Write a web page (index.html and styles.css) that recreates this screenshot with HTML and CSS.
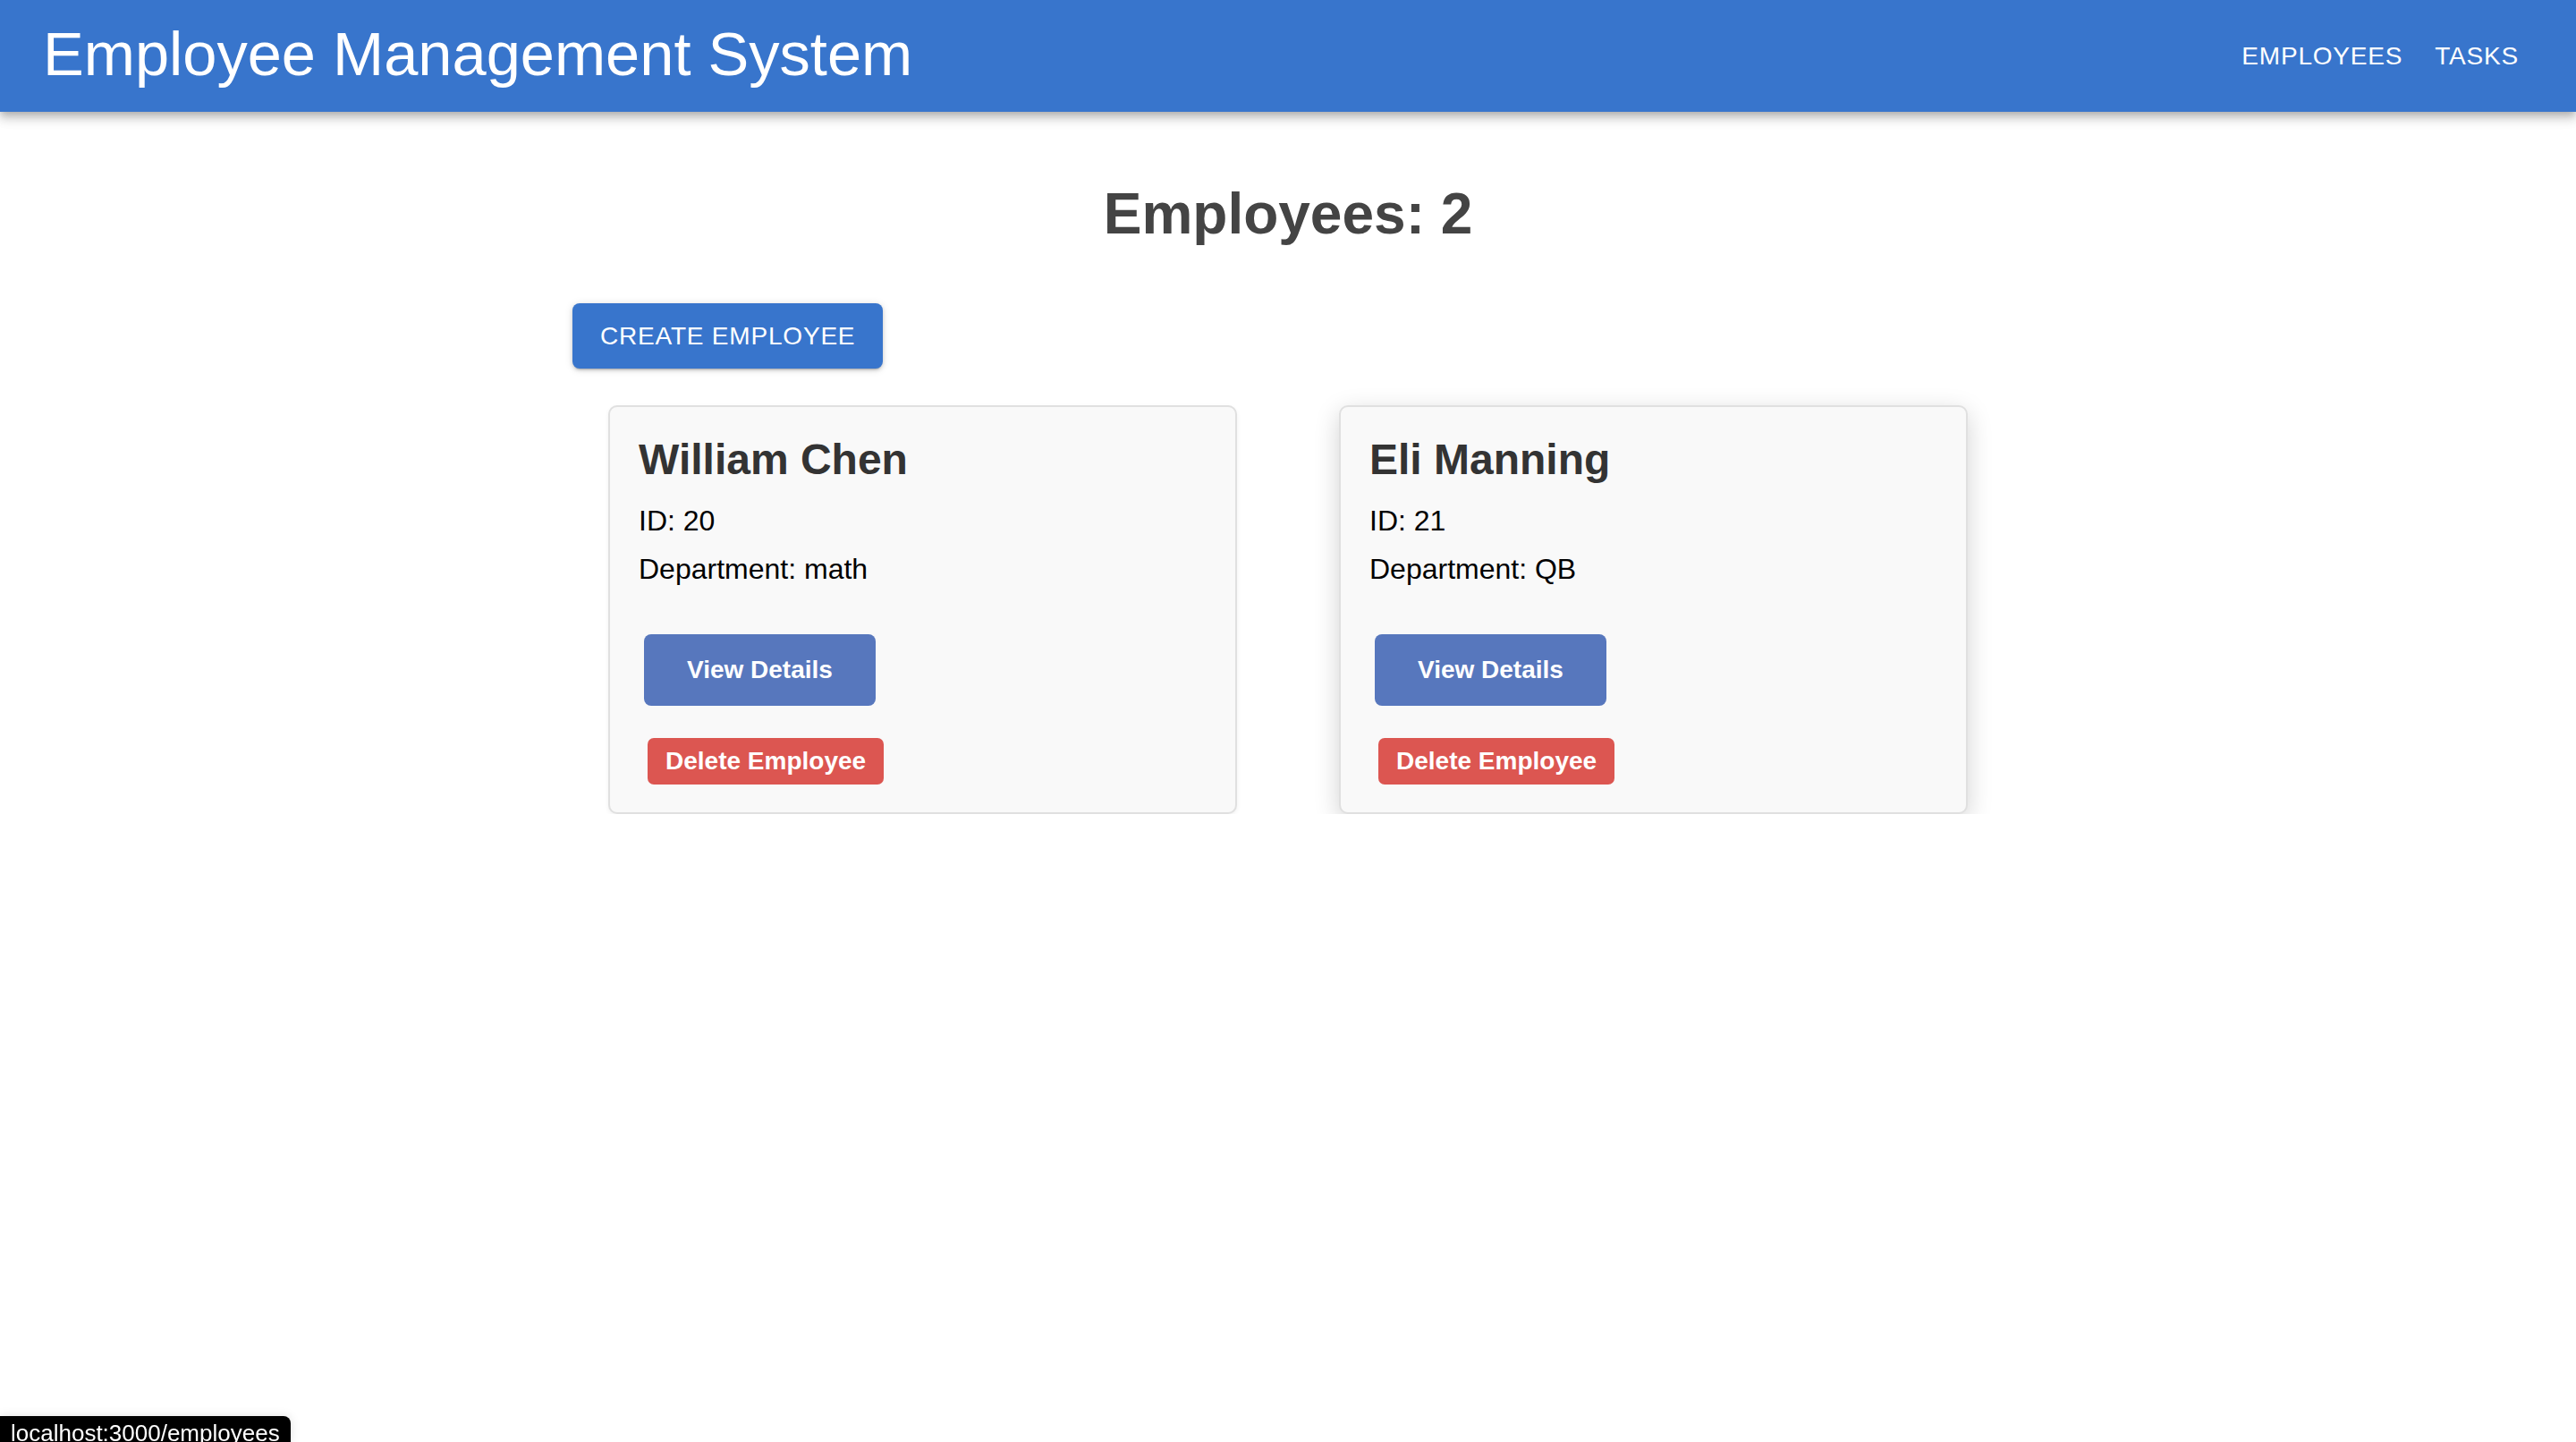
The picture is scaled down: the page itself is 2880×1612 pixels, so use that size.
FILE: index.html
```html
<!DOCTYPE html>
<html lang="en">
<head>
<meta charset="utf-8">
<title>Employee Management System</title>
<link rel="stylesheet" href="styles.css">
</head>
<body>
<header class="appbar">
  <h1 class="brand">Employee Management System</h1>
  <nav class="nav">
    <a class="nav-btn" href="#">Employees</a>
    <a class="nav-btn" href="#">Tasks</a>
  </nav>
</header>
<main class="page">
  <h2 class="page-title">Employees: 2</h2>
  <div class="container">
    <button class="create-btn">Create Employee</button>
    <div class="cards">
      <div class="card">
        <h3 class="card-name">William Chen</h3>
        <p class="card-line">ID: 20</p>
        <p class="card-line">Department: math</p>
        <div class="card-actions">
          <button class="view-btn">View Details</button>
          <button class="delete-btn">Delete Employee</button>
        </div>
      </div>
      <div class="card card-hover">
        <h3 class="card-name">Eli Manning</h3>
        <p class="card-line">ID: 21</p>
        <p class="card-line">Department: QB</p>
        <div class="card-actions">
          <button class="view-btn">View Details</button>
          <button class="delete-btn">Delete Employee</button>
        </div>
      </div>
    </div>
  </div>
</main>
<div class="status">localhost:3000/employees</div>
</body>
</html>
```
FILE: styles.css
```css
html, body {
  margin: 0;
  padding: 0;
  background: #ffffff;
  font-family: "Liberation Sans", Arial, Helvetica, sans-serif;
}

.appbar {
  height: 125px;
  box-sizing: border-box;
  background: #3875cc;
  color: #ffffff;
  display: flex;
  align-items: center;
  justify-content: space-between;
  padding: 0 48px;
  box-shadow: 0 4px 8px -2px rgba(0,0,0,0.22), 0 8px 10px 1px rgba(0,0,0,0.12), 0 2px 18px 2px rgba(0,0,0,0.08);
  position: relative;
  z-index: 2;
}

.brand {
  margin: 0 0 4px 0;
  font-size: 68.6px;
  font-weight: 400;
  line-height: normal;
}

.nav {
  display: flex;
  gap: 4px;
}

.nav-btn {
  color: #ffffff;
  text-decoration: none;
  text-transform: uppercase;
  font-size: 28px;
  letter-spacing: 0.8px;
  line-height: 48px;
  padding: 12px 16px;
}

.page {
  display: flex;
  flex-direction: column;
}

.page-title {
  margin: 77px 0 0 0;
  text-align: center;
  font-size: 64px;
  font-weight: 700;
  color: #444444;
  line-height: normal;
}

.container {
  width: 1600px;
  margin: 63px auto 0;
  display: flex;
  flex-direction: column;
  align-items: flex-start;
}

.create-btn {
  font-family: "Liberation Sans", Arial, Helvetica, sans-serif;
  background: #3875cc;
  color: #ffffff;
  border: none;
  border-radius: 8px;
  font-size: 28px;
  letter-spacing: 0.8px;
  text-transform: uppercase;
  line-height: 49px;
  height: 73px;
  padding: 12px 31px;
  box-shadow: 0 3px 2px -2px rgba(0,0,0,0.2), 0 2px 4px 0 rgba(0,0,0,0.14), 0 1px 10px 0 rgba(0,0,0,0.12);
}

.cards {
  display: flex;
  gap: 114px;
  margin: 41px 0 0 40px;
}

.card {
  width: 703px;
  box-sizing: border-box;
  background: #f9f9f9;
  border: 2px solid #e0e0e0;
  border-radius: 10px;
  padding: 31px 32px 31px;
  box-shadow: 0 2px 5px rgba(0,0,0,0.06);
}

.card-hover {
  box-shadow: 0 8px 28px rgba(0,0,0,0.18);
}

.card-name {
  margin: 0 0 22px 0;
  font-size: 48px;
  font-weight: 700;
  color: #333333;
  line-height: normal;
}

.card-line {
  margin: 16px 0;
  font-size: 32px;
  line-height: 38px;
  color: #000000;
}

.card-line:last-of-type {
  margin-bottom: 0;
}

.card-actions {
  display: flex;
  flex-direction: column;
  align-items: flex-start;
}

.view-btn,
.delete-btn {
  font-family: "Liberation Sans", Arial, Helvetica, sans-serif;
  color: #ffffff;
  border: none;
  font-size: 28px;
  font-weight: 700;
  line-height: 32px;
}

.view-btn {
  margin: 54px 0 0 6px;
  background: #5777bd;
  border-radius: 8px;
  padding: 24px 48px;
}

.delete-btn {
  margin: 36px 0 0 10px;
  background: #dc5651;
  border-radius: 7px;
  padding: 10px 20px;
}

.status {
  position: fixed;
  left: 0;
  bottom: 0;
  height: 25px;
  overflow: hidden;
  box-sizing: content-box;
  padding: 4px 12px 0 12px;
  background: #000000;
  color: #ffffff;
  font-size: 26px;
  line-height: 30px;
  border-top-right-radius: 8px;
  box-shadow: 0 0 12px rgba(0,0,0,0.12);
}
```
